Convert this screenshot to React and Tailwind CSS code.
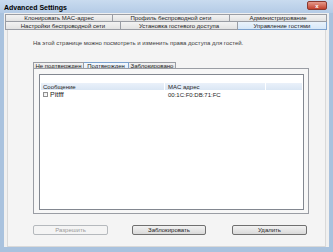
export default function App() {
    const font = { fontFamily: '"Liberation Sans", Arial, sans-serif' };

    return (
        <div className="w-[333px] h-[252px] bg-[#a9c2de] flex flex-col text-[6px] text-[#1e1e1e] leading-none overflow-hidden" style={font}>

            {/* Title bar */}
            <div className="h-[13px] flex items-start justify-between bg-gradient-to-b from-[#c9dbef] to-[#b4cbe6]">
                <span className="pl-[4px] pt-[4px] font-bold text-[7px] text-black">Advanced Settings</span>
                <div className="mr-[6px] mt-[1px] w-[20px] h-[9px] rounded-[2px] bg-gradient-to-b from-[#e49a8c] to-[#c2402c] border border-[#8a3a30] flex items-center justify-center text-white font-bold text-[6px]">
                    x
                </div>
            </div>

            {/* Client */}
            <div className="flex-1 mx-[4px] mb-[5px] bg-[#f0f0f0] flex flex-col">

                {/* Tab rows */}
                <div className="mt-[1px] ml-[1px] mr-[2px] flex flex-col">
                    <div className="flex h-[8px]">
                        <div className="w-[108px] border border-[#9a9da4] bg-gradient-to-b from-[#f3f3f3] to-[#e2e2e2] flex items-center justify-center">Клонировать MAC-адрес</div>
                        <div className="w-[117px] border border-l-0 border-[#9a9da4] bg-gradient-to-b from-[#f3f3f3] to-[#e2e2e2] flex items-center justify-center">Профиль беспроводной сети</div>
                        <div className="flex-1 border border-l-0 border-[#9a9da4] bg-gradient-to-b from-[#f3f3f3] to-[#e2e2e2] flex items-center justify-center">Администрирование</div>
                    </div>
                    <div className="flex h-[8px]">
                        <div className="w-[116px] border border-t-0 border-[#9a9da4] bg-gradient-to-b from-[#f3f3f3] to-[#e2e2e2] flex items-center justify-center">Настройки беспроводной сети</div>
                        <div className="w-[117px] border border-t-0 border-l-0 border-[#9a9da4] bg-gradient-to-b from-[#f3f3f3] to-[#e2e2e2] flex items-center justify-center">Установка гостевого доступа</div>
                        <div className="flex-1 border border-t-0 border-l-0 border-[#7da2ce] bg-gradient-to-b from-[#eaf3fc] to-[#d6e7f8] flex items-center justify-center">Управление гостями</div>
                    </div>
                </div>

                {/* Tab page */}
                <div className="flex-1 ml-[3px] mr-[3px] border border-t-0 border-[#d9d9d9] bg-[#f4f4f4] flex flex-col pl-[25px] pr-[15px]">
                    <p className="mt-[10px] text-[#3c3c3c]">
                        На этой странице можно посмотреть и изменить права доступа для гостей.
                    </p>

                    {/* Sub tabs */}
                    <div className="mt-[16px] flex h-[6px] items-stretch">
                        <div className="w-[51px] border border-b-0 border-[#9a9da4] bg-gradient-to-b from-[#f3f3f3] to-[#e2e2e2] flex items-center justify-center">Не подтвержден</div>
                        <div className="w-[45px] border border-b-0 border-l-0 border-[#7da2ce] bg-gradient-to-b from-[#f4f9fe] to-[#e4eef9] flex items-center justify-center">Подтвержден</div>
                        <div className="w-[47px] border border-b-0 border-l-0 border-[#9a9da4] bg-gradient-to-b from-[#f3f3f3] to-[#e2e2e2] flex items-center justify-center">Заблокировано</div>
                    </div>

                    {/* Sub tab panel */}
                    <div className="w-[276px] h-[146px] border border-[#9a9da4] bg-[#f7f7f7] pt-[5px] pl-[5px] pr-[4px] pb-[3px] flex">
                        <div className="flex-1 border border-[#828790] bg-white flex flex-col pt-[8px]">
                            <div className="h-[7px] mx-[1px] bg-gradient-to-b from-[#eaf1fa] to-[#dae6f4] flex items-center">
                                <div className="w-[124px] h-full flex items-center pl-[2px] border-r border-white">Сообщение</div>
                                <div className="w-[101px] h-full flex items-center pl-[3px] border-r border-white">MAC адрес</div>
                                <div className="flex-1" />
                            </div>
                            <div className="h-[9px] flex items-center mx-[1px]">
                                <div className="w-[124px] flex items-center pl-[2px] gap-[2px]">
                                    <span className="w-[5px] h-[5px] border border-[#8f8f8f] bg-gradient-to-br from-[#e8e8e8] to-white" />
                                    <span className="text-[7px]">Pitfff</span>
                                </div>
                                <div className="pl-[3px]">00:1C:F0:DB:71:FC</div>
                            </div>
                        </div>
                    </div>

                    {/* Buttons */}
                    <div className="mt-[11px] flex">
                        <div className="w-[75px] h-[10px] rounded-[2px] border border-[#b5b9bd] bg-[#f4f4f4] text-[#9a9a9a] flex items-center justify-center">Разрешить</div>
                        <div className="ml-[24px] w-[74px] h-[10px] rounded-[2px] border border-[#707070] bg-gradient-to-b from-[#f2f2f2] to-[#d9d9d9] flex items-center justify-center">Заблокировать</div>
                        <div className="ml-[26px] w-[75px] h-[10px] rounded-[2px] border border-[#707070] bg-gradient-to-b from-[#f2f2f2] to-[#d9d9d9] flex items-center justify-center">Удалить</div>
                    </div>
                </div>
            </div>
        </div>
    );
}
